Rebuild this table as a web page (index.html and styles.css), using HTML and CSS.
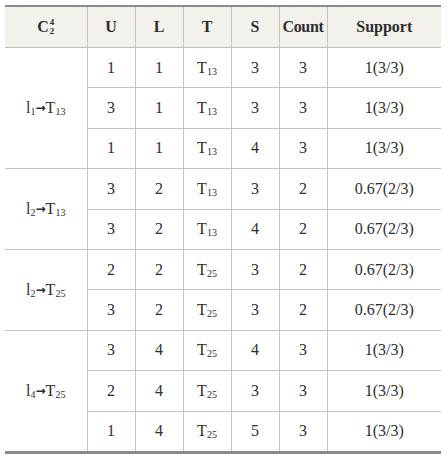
FILE: index.html
```html
<!DOCTYPE html>
<html>
<head>
<meta charset="utf-8">
<link rel="stylesheet" href="styles.css">
</head>
<body>
<table class="tbl">
  <colgroup>
    <col class="c-rule"><col class="c-n"><col class="c-n"><col class="c-n"><col class="c-n"><col class="c-cnt"><col class="c-sup">
  </colgroup>
  <thead>
    <tr>
      <th><span class="cc">C<span class="stack"><span class="sup">4</span><span class="sub">2</span></span></span></th>
      <th>U</th><th>L</th><th>T</th><th>S</th><th class="count">Count</th><th>Support</th>
    </tr>
  </thead>
  <tbody>
    <tr class="grp">
      <td rowspan="3" class="rule">l<sub>1</sub><span class="arr">→</span>T<sub>13</sub></td>
      <td>1</td><td>1</td><td>T<sub>13</sub></td><td>3</td><td>3</td><td>1(3/3)</td>
    </tr>
    <tr><td>3</td><td>1</td><td>T<sub>13</sub></td><td>3</td><td>3</td><td>1(3/3)</td></tr>
    <tr><td>1</td><td>1</td><td>T<sub>13</sub></td><td>4</td><td>3</td><td>1(3/3)</td></tr>
    <tr class="grp">
      <td rowspan="2" class="rule">l<sub>2</sub><span class="arr">→</span>T<sub>13</sub></td>
      <td>3</td><td>2</td><td>T<sub>13</sub></td><td>3</td><td>2</td><td>0.67(2/3)</td>
    </tr>
    <tr><td>3</td><td>2</td><td>T<sub>13</sub></td><td>4</td><td>2</td><td>0.67(2/3)</td></tr>
    <tr class="grp">
      <td rowspan="2" class="rule">l<sub>2</sub><span class="arr">→</span>T<sub>25</sub></td>
      <td>2</td><td>2</td><td>T<sub>25</sub></td><td>3</td><td>2</td><td>0.67(2/3)</td>
    </tr>
    <tr><td>3</td><td>2</td><td>T<sub>25</sub></td><td>3</td><td>2</td><td>0.67(2/3)</td></tr>
    <tr class="grp">
      <td rowspan="3" class="rule last-rule">l<sub>4</sub><span class="arr">→</span>T<sub>25</sub></td>
      <td>3</td><td>4</td><td>T<sub>25</sub></td><td>4</td><td>3</td><td>1(3/3)</td>
    </tr>
    <tr><td>2</td><td>4</td><td>T<sub>25</sub></td><td>3</td><td>3</td><td>1(3/3)</td></tr>
    <tr class="last"><td>1</td><td>4</td><td>T<sub>25</sub></td><td>5</td><td>3</td><td>1(3/3)</td></tr>
  </tbody>
</table>
</body>
</html>
```

FILE: styles.css
```css
html, body {
  margin: 0;
  padding: 0;
  background: #ffffff;
}
body {
  padding: 5px 6px 0 5px;
  font-family: "Liberation Serif", "Times New Roman", serif;
  color: #2e2e2e;
}
.tbl {
  border-collapse: collapse;
  table-layout: fixed;
  width: 436px;
  font-size: 16px;
}
.c-rule { width: 82px; }
.c-n { width: 48px; }
.c-cnt { width: 48px; }
.c-sup { width: 114px; }

.tbl th {
  background: #f3f1eb;
  border-top: 2px solid #8a8a8a;
  border-bottom: 1px solid #bdbdbd;
  border-left: 1px solid #c4c4c4;
  height: 40px;
  padding: 0;
  font-weight: bold;
  text-align: center;
  vertical-align: middle;
}
.tbl th:first-child { border-left: none; }
.tbl th.count { letter-spacing: -0.3px; }

.tbl td {
  height: 39.4px;
  padding: 0;
  text-align: center;
  vertical-align: middle;
  border-top: 1px solid #c4c4c4;
  border-left: 1px solid #c4c4c4;
}
.tbl td.rule { border-left: none; }
.tbl tr.last td,
.tbl td.last-rule { border-bottom: 3px solid #8a8a8a; }

sub {
  font-size: 10px;
  vertical-align: -2px;
  line-height: 0;
}
.arr {
  font-family: "DejaVu Sans", sans-serif;
  font-size: 12px;
  font-weight: bold;
  vertical-align: 1px;
}
.cc {
  display: inline-flex;
  align-items: center;
}
.stack {
  display: inline-flex;
  flex-direction: column;
  font-size: 9px;
  line-height: 9px;
  margin-left: 1px;
}
```
